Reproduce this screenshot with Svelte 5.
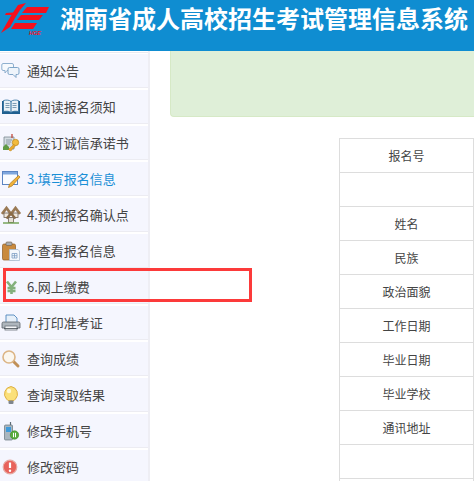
<script>
  const menu = [
    { key: 'chat', label: '通知公告' },
    { key: 'book', label: '1.阅读报名须知' },
    { key: 'sign', label: '2.签订诚信承诺书' },
    { key: 'edit', label: '3.填写报名信息', active: true },
    { key: 'people', label: '4.预约报名确认点' },
    { key: 'clip', label: '5.查看报名信息' },
    { key: 'yen', label: '6.网上缴费' },
    { key: 'print', label: '7.打印准考证' },
    { key: 'search', label: '查询成绩' },
    { key: 'bulb', label: '查询录取结果' },
    { key: 'phone', label: '修改手机号' },
    { key: 'alert', label: '修改密码' }
  ];
  const rows = ['报名号', '', '姓名', '民族', '政治面貌', '工作日期', '毕业日期', '毕业学校', '通讯地址', '', ''];
</script>

<div class="page">
  <header class="top">
    <svg class="logo" viewBox="0 0 52 36" width="52" height="36" aria-hidden="true">
      <polygon fill="#f5101c" points="26,3 18,5 13,12.500 6,13 5,15 11.500,15 1,33 10,27 15,18 20,10" />
      <polygon fill="#f5101c" points="27,7 49,7 46,13 22,13" />
      <polygon fill="#f5101c" points="21,15 43,15 39,20 17,20" />
      <polygon fill="#f5101c" points="15,23 37,23 33,29 11,29" />
      <text x="29" y="34.500" class="mark">HGE</text>
    </svg>
    <h1>湖南省成人高校招生考试管理信息系统</h1>
  </header>

  <div class="body">
    <nav class="side">
      {#each menu as item}
        <div class="row" class:active={item.active}>
          <svg class="ico" viewBox="0 0 20 20" width="20" height="20" aria-hidden="true">
            {#if item.key === 'chat'}
              <path d="M2 2.500h9a1.500 1.500 0 0 1 1.500 1.500v4a1.500 1.500 0 0 1-1.500 1.500H6l-2 2.500V9.500H2A1.500 1.500 0 0 1 .8 8V4A1.500 1.500 0 0 1 2 2.500z" fill="#f6f9fd" stroke="#8fb0cf" />
              <path d="M8.500 6.500h8a1.500 1.500 0 0 1 1.500 1.500v4a1.500 1.500 0 0 1-1.500 1.500H15v3l-3-3H8.500A1.500 1.500 0 0 1 7 12V8a1.500 1.500 0 0 1 1.500-1.500z" fill="#eef4fb" stroke="#7fa5c8" />
            {:else if item.key === 'book'}
              <path d="M1 4h18v13H1z" fill="#1f5f8f" />
              <path d="M2.500 3.500c3-.8 6-.5 7.500 1 1.500-1.500 4.500-1.800 7.500-1v11c-3-.6-6-.4-7.500 1-1.500-1.400-4.500-1.600-7.500-1z" fill="#e9f1f7" stroke="#2b6c9c" stroke-width=".8" />
              <path d="M4.500 6.500h4M4.500 8.500h4M4.500 10.500h4M11.500 6.500h4M11.500 8.500h4M11.500 10.500h4" stroke="#7d9db5" />
              <path d="M10 4.500v11" stroke="#2b6c9c" />
            {:else if item.key === 'sign'}
              <path d="M3 4h10v12H3z" fill="#d5dde3" stroke="#7b8a93" stroke-width=".8" />
              <path d="M5 7h6M5 9h5M5 11h4" stroke="#8b9aa5" />
              <path d="M11 1v4" stroke="#c0392b" stroke-width="1.200" />
              <path d="M2 14l3-3 3 3v3H2z" fill="#5f9a45" />
              <circle cx="14.500" cy="9.500" r="3.200" fill="#f2bb3d" stroke="#b98620" stroke-width=".7" />
              <path d="M12.500 11.500L7.500 16.500l1.500 1.500 1.500-.5.500-1.500 1.500-.5 2-3z" fill="#eaa92c" stroke="#b98620" stroke-width=".5" />
            {:else if item.key === 'edit'}
              <rect x="1.500" y="2.500" width="15" height="13" fill="#fafcff" stroke="#5c85c2" />
              <rect x="2" y="3" width="14" height="2.500" fill="#7fa7de" />
              <path d="M17.500 6.500l1.500 1.500-8 9-3.500 1.500 1-3.500z" fill="#f0b23a" stroke="#a9761c" stroke-width=".7" />
            {:else if item.key === 'people'}
              <path d="M1 9l4.500-6L10 9l4.500-6L19 9" fill="none" stroke="#9a7a55" stroke-width="2.800" />
              <rect x="3" y="8" width="5" height="4.500" fill="#f1e9df" stroke="#6f6154" stroke-width=".8" />
              <rect x="12" y="8" width="5" height="4.500" fill="#f1e9df" stroke="#6f6154" stroke-width=".8" />
              <path d="M5.500 13.500l4.500-5 4.500 5" fill="none" stroke="#8a6b47" stroke-width="2.200" />
              <rect x="7.500" y="12.500" width="5" height="5" fill="#e6dfd4" stroke="#6f6154" stroke-width=".8" />
              <path d="M2 18h16" stroke="#6d9f50" stroke-width="1.400" />
            {:else if item.key === 'clip'}
              <rect x="1.500" y="3" width="13" height="16" rx="1.500" fill="#c98a3e" stroke="#8c5a22" stroke-width=".7" />
              <rect x="5" y="1" width="6" height="3.500" rx="1" fill="#a9adb2" stroke="#6f5a3f" stroke-width=".6" />
              <path d="M8.500 8.500H17l1.500 1.500v9.500h-10z" fill="#f4f8fc" stroke="#a7bbd1" stroke-width=".8" />
              <path d="M11 12.500h5v4.500h-5zM11 14.700h5M13.500 12.500v4.500" fill="none" stroke="#7fa0c4" stroke-width=".8" />
            {:else if item.key === 'yen'}
              <path d="M6 4.500l4.500 5.500 4.500-5.500M10.500 10v7M6.500 11h8M6.500 14h8" fill="none" stroke="#84b07c" stroke-width="2.600" />
            {:else if item.key === 'print'}
              <path d="M5 2h8l3 3v5H5z" fill="#e7f0f9" stroke="#4e86bd" stroke-width=".9" />
              <path d="M2.500 9h15A1.500 1.500 0 0 1 19 10.500V15H1v-4.500A1.500 1.500 0 0 1 2.500 9z" fill="#aeb6bd" stroke="#5b636a" stroke-width=".8" />
              <rect x="4" y="13" width="12" height="4" fill="#f4f6f8" stroke="#6a7279" stroke-width=".8" />
              <path d="M3 15.500h14" stroke="#3e464d" stroke-width=".8" />
            {:else if item.key === 'search'}
              <path d="M12 12l5 5" stroke="#c09058" stroke-width="3" stroke-linecap="round" />
              <circle cx="8" cy="8" r="6" fill="#fbf7ef" stroke="#dcb585" stroke-width="1.600" />
            {:else if item.key === 'bulb'}
              <path d="M10 1.500a7.500 7.500 0 0 0-4.500 12.500l1.500 1.500h6l1.500-1.500A7.500 7.500 0 0 0 10 1.500z" fill="#fbe07a" stroke="#d9a93a" stroke-width=".9" />
              <circle cx="8" cy="6" r="2.200" fill="#fff8d6" />
              <rect x="7.500" y="15.500" width="5" height="3.500" rx="1" fill="#7f868c" />
            {:else if item.key === 'phone'}
              <path d="M9.500 1v4" stroke="#5b6b75" stroke-width="1.200" />
              <rect x="3.500" y="4" width="8" height="15" rx="1" fill="#a9b6bf" stroke="#64727c" stroke-width=".7" />
              <rect x="5" y="6" width="5" height="5" fill="#3f9bdc" />
              <circle cx="13.500" cy="14" r="4.200" fill="#58ad3e" stroke="#3b8427" stroke-width=".6" />
              <path d="M12.500 11.800v4.400M14.500 11.800v4.400" stroke="#fff" stroke-width="1" />
            {:else if item.key === 'alert'}
              <circle cx="9" cy="10" r="6.800" fill="#e8625b" stroke="#e6a9a2" stroke-width="1.200" />
              <path d="M9 5.500v5.500" stroke="#fff" stroke-width="2.200" />
              <circle cx="9" cy="13.800" r="1.200" fill="#fff" />
            {/if}
          </svg>
          <span>{item.label}</span>
        </div>
      {/each}
    </nav>

    <main class="content">
      <div class="notice"></div>
      <table class="form">
        <tbody>
          {#each rows as label}
            <tr><td>{label}</td></tr>
          {/each}
        </tbody>
      </table>
    </main>
  </div>

  <div class="mark-box"></div>
</div>

<style>
  :global(html), :global(body) {
    margin: 0;
    overflow: hidden;
    background: #fff;
  }
  .page {
    position: relative;
    width: 474px;
    height: 481px;
    overflow: hidden;
    font-family: "Noto Sans CJK SC", "Liberation Sans", sans-serif;
    color: #444;
  }
  .top {
    display: flex;
    height: 51px;
    background: #0f8dd1;
    box-sizing: border-box;
  }
  .logo {
    flex: none;
  }
  .mark {
    font: italic bold 5.500px "Liberation Sans", sans-serif;
    fill: #f5101c;
  }
  h1 {
    margin: 0 0 0 8px;
    font-size: 24px;
    line-height: 36px;
    font-weight: 700;
    color: #fff;
    white-space: nowrap;
  }
  .body {
    display: flex;
  }
  .side {
    flex: none;
    width: 150px;
    box-sizing: border-box;
    padding-top: 1px;
    border-right: 2px solid #eeeef4;
  }
  .side::before {
    content: "";
    display: block;
    height: 1px;
    margin-bottom: 1px;
    background: #e9e9f0;
  }
  .row {
    display: flex;
    align-items: center;
    height: 34px;
    box-sizing: border-box;
    margin-bottom: 2px;
    background: #f5f6fe;
    border-bottom: 1px solid #ececf2;
    font-size: 13px;
  }
  .row.active {
    color: #1a8fd6;
  }
  .ico {
    flex: none;
    margin-left: 1px;
  }
  .row span {
    margin-left: 6px;
    white-space: nowrap;
  }
  .content {
    flex: 1;
    min-width: 0;
    padding-left: 20px;
  }
  .notice {
    height: 66px;
    box-sizing: border-box;
    background: #dfefd8;
    border-bottom: 1px solid #d6e9c6;
    border-left: 1px solid #d6e9c6;
    border-bottom-left-radius: 4px;
  }
  .form {
    width: 135px;
    margin: 21px 0 0 169px;
    border-collapse: collapse;
    table-layout: fixed;
  }
  .form td {
    height: 33px;
    padding: 0;
    border: 1px solid #ddd;
    text-align: center;
    font-size: 12px;
    color: #444;
  }
  .mark-box {
    position: absolute;
    left: 3px;
    top: 268px;
    width: 249px;
    height: 34px;
    box-sizing: border-box;
    border: 3px solid #fc3a3a;
  }
</style>
